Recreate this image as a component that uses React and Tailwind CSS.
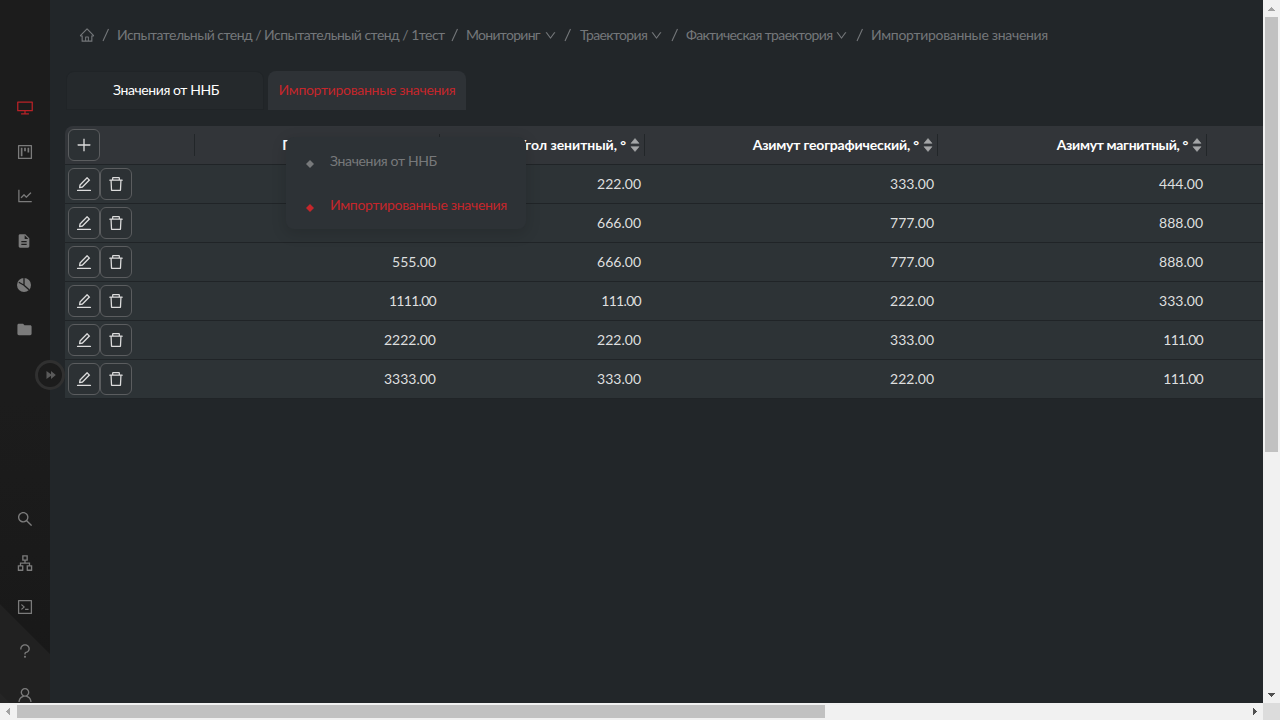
import React from "react";
import {
  AiOutlineHome, AiOutlinePlus, AiOutlineEdit, AiOutlineDelete, AiOutlineDesktop, AiOutlineProject,
  AiOutlineLineChart, AiOutlineSearch, AiOutlineApartment, AiOutlineCode, AiOutlineQuestion,
  AiOutlineUser, AiOutlineDown,
} from "react-icons/ai";
import { MdFolder, MdDescription } from "react-icons/md";

function PieIcon() {
  return (
    <svg width="16" height="16" viewBox="0 0 16 16" className="-mt-px -ml-0.5">
      <circle cx="8" cy="8" r="7" fill="currentColor" />
      <path d="M2.8 5.3 8 8.2V1M8 8.2l5 4.6" fill="none" stroke="#1c1c1c" strokeWidth="1.3" />
    </svg>
  );
}

const topIcons = [
  <AiOutlineDesktop size={18} className="text-[#b92227]" />,
  <AiOutlineProject size={18} />,
  <AiOutlineLineChart size={18} className="-mt-0.5" />,
  <MdDescription size={16} className="-ml-0.5" />,
  <PieIcon />,
  <MdFolder size={17} className="-ml-0.5" />,
];
const bottomIcons = [
  <AiOutlineSearch size={18} />,
  <AiOutlineApartment size={18} />,
  <AiOutlineCode size={18} />,
  <AiOutlineQuestion size={18} />,
  <AiOutlineUser size={18} />,
];

function Sidebar() {
  return (
    <aside className="relative flex h-[703px] w-[50px] shrink-0 flex-col bg-[#1c1c1c] text-[#7b7b7b]">
      <svg className="absolute bottom-0 left-0" width="50" height="303" viewBox="0 0 50 303">
        <defs>
          <linearGradient id="shade" x1="0" y1="0" x2="0" y2="1">
            <stop offset="0" stopColor="#1c1c1c" />
            <stop offset="1" stopColor="#181818" />
          </linearGradient>
        </defs>
        <path d="M0 0h50v303H0z" fill="url(#shade)" />
        <path d="M0 204 50 254v49H0z" fill="#212121" />
        <path d="M0 293 10 303H0z" fill="#252525" />
      </svg>
      <div className="relative mt-[86px] flex flex-col gap-[0.4px]">
        {topIcons.map((icon, i) => (
          <div key={i} className="flex h-11 items-center justify-center">{icon}</div>
        ))}
      </div>
      <div className="relative mt-[145px] flex h-[205px] flex-col overflow-hidden">
        {bottomIcons.map((icon, i) => (
          <div key={i} className="flex h-11 shrink-0 items-center justify-center">{icon}</div>
        ))}
      </div>
      <button className="absolute top-[360px] left-[35px] z-10 flex size-[30px] items-center justify-center rounded-full border-[3px] border-[#303030] bg-[#1c1c1c] text-[#5a5a5a]">
        <svg width="10" height="8" viewBox="0 0 10 8" className="ml-px">
          <path d="M.5 0 5 3.2V0l4.8 4L5 8V4.8L.5 8z" fill="currentColor" />
        </svg>
      </button>
    </aside>
  );
}

function Slash({ className }) {
  return (
    <svg width="8" height="14" viewBox="0 0 8 14" className={className}>
      <path d="M1 13 6.5 1" stroke="currentColor" strokeWidth="1.1" fill="none" />
    </svg>
  );
}

function Breadcrumbs() {
  return (
    <nav className="flex h-5 items-center pl-[14px] text-[14px] leading-5 whitespace-nowrap text-[#74777a]">
      <AiOutlineHome size={16} className="shrink-0" />
      <Slash className="ml-[7px] shrink-0" />
      <span className="ml-[7px] w-[327px] shrink-0 tracking-[-0.52px]">Испытательный стенд / Испытательный стенд / 1тест</span>
      <Slash className="ml-[7px] shrink-0" />
      <span className="ml-[7px] w-[78px] shrink-0 tracking-[-0.7px]">Мониторинг</span>
      <AiOutlineDown size={13} className="shrink-0" />
      <Slash className="ml-[7px] shrink-0" />
      <span className="ml-[8px] w-[70px] shrink-0 tracking-[-0.65px]">Траектория</span>
      <AiOutlineDown size={13} className="shrink-0" />
      <Slash className="ml-[8px] shrink-0" />
      <span className="ml-[7px] w-[149px] shrink-0 tracking-[-0.62px]">Фактическая траектория</span>
      <AiOutlineDown size={13} className="shrink-0" />
      <Slash className="ml-[8px] shrink-0" />
      <span className="ml-[7px] shrink-0 tracking-[-0.3px]">Импортированные значения</span>
    </nav>
  );
}

function IconButton({ children }) {
  return (
    <button className="flex size-8 items-center justify-center rounded-md border border-[#5b5d5f] bg-[#2c3134] text-[#dcdcdc]">
      {children}
    </button>
  );
}

function HeaderCell({ children, className }) {
  return (
    <div className="relative flex items-center justify-end gap-[4px] pr-[5px] whitespace-nowrap">
      <span className={className}>{children}</span>
      <svg width="10" height="14" viewBox="0 0 10 14" className="text-[#a5a6a8]">
        <path d="M5 .5 9 5.3H1zM5 13.5 9 8.7H1z" fill="currentColor" stroke="currentColor" strokeWidth=".6" strokeLinejoin="round" />
      </svg>
      <i className="absolute top-2 right-0 h-[22px] w-px bg-[#222629]" />
    </div>
  );
}

const rows = [
  ["111.00", "222.00", "333.00", "444.00"],
  ["555.00", "666.00", "777.00", "888.00"],
  ["555.00", "666.00", "777.00", "888.00"],
  ["1111.00", "111.00", "222.00", "333.00"],
  ["2222.00", "222.00", "333.00", "111.00"],
  ["3333.00", "333.00", "222.00", "111.00"],
];

function Table() {
  return (
    <div className="w-[1198px] overflow-hidden rounded-tl-lg">
      <div className="grid h-[39px] grid-cols-[130px_245px_205px_293px_269px_1fr] border-b border-[#202427] bg-[#323539] text-[14px] font-bold text-white">
        <div className="relative pt-[3px] pl-[3px]">
          <IconButton><AiOutlinePlus size={18} /></IconButton>
          <i className="absolute top-2 right-0 h-[22px] w-px bg-[#222629]" />
        </div>
        <HeaderCell className="pb-0.5 tracking-[0.15px]">Глубина по стволу, м</HeaderCell>
        <HeaderCell className="pb-0.5 tracking-[-0.05px]">Угол зенитный, °</HeaderCell>
        <HeaderCell className="pb-0.5 tracking-[-0.18px]">Азимут географический, °</HeaderCell>
        <HeaderCell className="pb-0.5 tracking-[-0.33px]">Азимут магнитный, °</HeaderCell>
      </div>
      {rows.map((row, i) => (
        <div key={i} className="grid h-[39px] grid-cols-[130px_245px_205px_293px_269px_1fr] border-b border-[#202427] bg-[#2d3336] text-[14px] text-[#dedfdf]">
          <div className="flex pt-[3px] pl-[3px]">
            <IconButton><AiOutlineEdit size={18} /></IconButton>
            <IconButton><AiOutlineDelete size={18} /></IconButton>
          </div>
          {row.map((v, j) => (
            <div key={j} className={`flex items-center justify-end pr-[4px] pb-0.5 ${v.startsWith("111") ? "tracking-[-0.7px]" : ""}`}>{v}</div>
          ))}
        </div>
      ))}
    </div>
  );
}

function Diamond() {
  return (
    <svg width="8" height="8" viewBox="0 0 8 8" className="mt-[3px]">
      <path d="M4 0 8 4 4 8 0 4z" fill="currentColor" />
    </svg>
  );
}

function Dropdown() {
  return (
    <div className="absolute top-[137px] left-[286px] z-20 flex h-[92px] w-[240px] flex-col rounded-lg bg-[#2d3236] pt-[3px] text-[14px] shadow-[0_4px_14px_2px_rgba(0,0,0,0.12)]">
      <div className="flex h-11 items-center pl-5 text-[#77797b]">
        <Diamond />
        <span className="ml-4 pb-[3px] tracking-[-0.35px] whitespace-nowrap">Значения от ННБ</span>
      </div>
      <div className="flex h-11 items-center pl-5 text-[#c5262b]">
        <Diamond />
        <span className="ml-4 pb-[3px] tracking-[-0.3px] whitespace-nowrap">Импортированные значения</span>
      </div>
    </div>
  );
}

function Arrow({ d, className }) {
  return (
    <svg width="17" height="17" viewBox="0 0 17 17" className={className} shapeRendering="crispEdges">
      <path d={d} fill="currentColor" />
    </svg>
  );
}

export default function App() {
  return (
    <div className="relative flex h-[720px] w-[1280px] flex-col overflow-hidden bg-[#222629] font-['Lato','Noto_Sans',sans-serif]">
      <div className="flex h-[703px]">
        <Sidebar />
        <main className="flex w-[1213px] flex-col overflow-hidden pt-[25px] pl-[15px]">
          <Breadcrumbs />
          <div className="mt-[26px] flex gap-[4px] pl-px text-[14px]">
            <div className="flex h-[39px] w-[198px] items-center justify-center rounded-t-lg border border-[#202427] bg-[#25292c] pb-0.5 pl-0.5 tracking-[-0.4px] text-white">Значения от ННБ</div>
            <div className="flex h-[39px] w-[198px] items-center justify-center rounded-t-lg bg-[#2e3236] pb-0.5 tracking-[-0.3px] whitespace-nowrap text-[#c5262b]">Импортированные значения</div>
          </div>
          <div className="mt-4"><Table /></div>
        </main>
        <div className="flex w-[17px] flex-col items-center bg-[#f1f1f1]">
          <Arrow d="M8 7h1v1h1v1h1v1h1v1H5v-1h1V9h1V8h1z" className="text-[#a3a3a3]" />
          <div className="h-[435px] w-[13px] bg-[#c1c1c1]" />
          <Arrow d="M5 7h7v1h-1v1h-1v1H9v1H8v-1H7V9H6V8H5z" className="mt-auto text-[#505050]" />
        </div>
      </div>
      <div className="flex h-[17px] items-center bg-[#f1f1f1]">
        <Arrow d="M10 5v7H9v-1H8v-1H7V9H6V8h1V7h1V6h1V5z" className="text-[#a3a3a3]" />
        <div className="h-[13px] w-[808px] bg-[#c1c1c1]" />
        <Arrow d="M7 5v7h1v-1h1v-1h1V9h1V8h-1V7H9V6H8V5z" className="ml-auto text-[#505050]" />
        <div className="size-[17px] bg-[#dcdcdc]" />
      </div>
      <Dropdown />
    </div>
  );
}
